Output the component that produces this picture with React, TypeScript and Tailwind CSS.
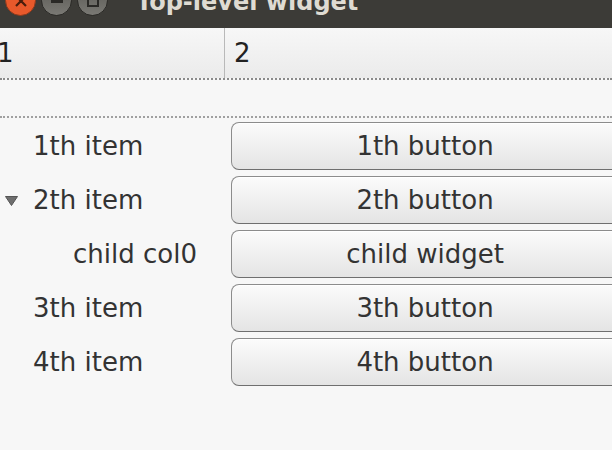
const rows = [
  { label: "1th item", button: "1th button", indent: "pl-[33px]" },
  { label: "2th item", button: "2th button", indent: "pl-[33px]", open: true },
  { label: "child col0", button: "child widget", indent: "pl-[73px]" },
  { label: "3th item", button: "3th button", indent: "pl-[33px]" },
  { label: "4th item", button: "4th button", indent: "pl-[33px]" },
];

function TitleBar() {
  return (
    <div className="h-[28px] bg-[#3c3b37] flex items-start overflow-hidden">
      <div className="flex gap-[5px] pl-[5px] -mt-[15px]">
        <div className="w-[31px] h-[31px] rounded-full bg-[#e8592b] border border-[#8f3a1c] flex items-start justify-center pt-[11px]">
          <svg width="14" height="10" viewBox="0 0 14 10">
            <path d="M2 9 L7 4 L12 9 M2 -1 L7 4 L12 -1" stroke="#4a1d0c" strokeWidth="2.2" fill="none" />
          </svg>
        </div>
        <div className="w-[31px] h-[31px] rounded-full bg-gradient-to-b from-[#5a5954] to-[#7a7974] border border-[#2c2b28] flex items-start justify-center pt-[14px]">
          <div className="w-[12px] h-[3px] bg-[#2a2926]" />
        </div>
        <div className="w-[31px] h-[31px] rounded-full bg-gradient-to-b from-[#5a5954] to-[#7a7974] border border-[#2c2b28] flex items-start justify-center pt-[9px]">
          <div className="w-[12px] h-[12px] border-2 border-[#2a2926]" />
        </div>
      </div>
      <div className="pl-[28px] -mt-[14px] font-['DejaVu_Sans',sans-serif] font-bold text-[24px] leading-[32px] text-[#dfdbd2]">
        Top-level widget
      </div>
    </div>
  );
}

function Header() {
  return (
    <div className="h-[52px] flex bg-gradient-to-b from-[#f7f7f7] to-[#ebebeb] border-b-2 border-dotted border-[#8a8a8a] text-[#222]">
      <div className="w-[228px] border-r border-[#b9b9b9] flex items-center -ml-[3px]">1</div>
      <div className="flex items-center pl-[9px]">2</div>
    </div>
  );
}

export default function App() {
  return (
    <div className="w-[612px] h-[450px] overflow-hidden bg-[#f7f7f7] font-['DejaVu_Sans',sans-serif] text-[26px]">
      <TitleBar />
      <Header />
      <div className="h-[38px] border-b-2 border-dotted border-[#a0a0a0]" />
      <div className="flex flex-col pt-[1px]">
        {rows.map((r) => (
          <div key={r.label} className="h-[54px] flex items-center">
            <div className={`w-[231px] shrink-0 flex items-center relative text-[#333] ${r.indent}`}>
              {r.open && (
                <svg className="absolute left-[5px] top-[15px]" width="13" height="10" viewBox="0 0 13 10">
                  <path d="M0.5 0.5 L12.5 0.5 L6.5 9.5 Z" fill="#6e6e6e" stroke="#555" />
                </svg>
              )}
              {r.label}
            </div>
            <div className="w-[388px] shrink-0 h-[48px] rounded-[8px] border border-[#8c8c8c] border-b-[#6f6f6f] bg-gradient-to-b from-[#fbfbfb] via-[#f0f0f0] to-[#e4e4e4] shadow-[inset_0_1px_0_#ffffff] flex items-center justify-center text-[#333]">
              {r.button}
            </div>
          </div>
        ))}
      </div>
    </div>
  );
}
